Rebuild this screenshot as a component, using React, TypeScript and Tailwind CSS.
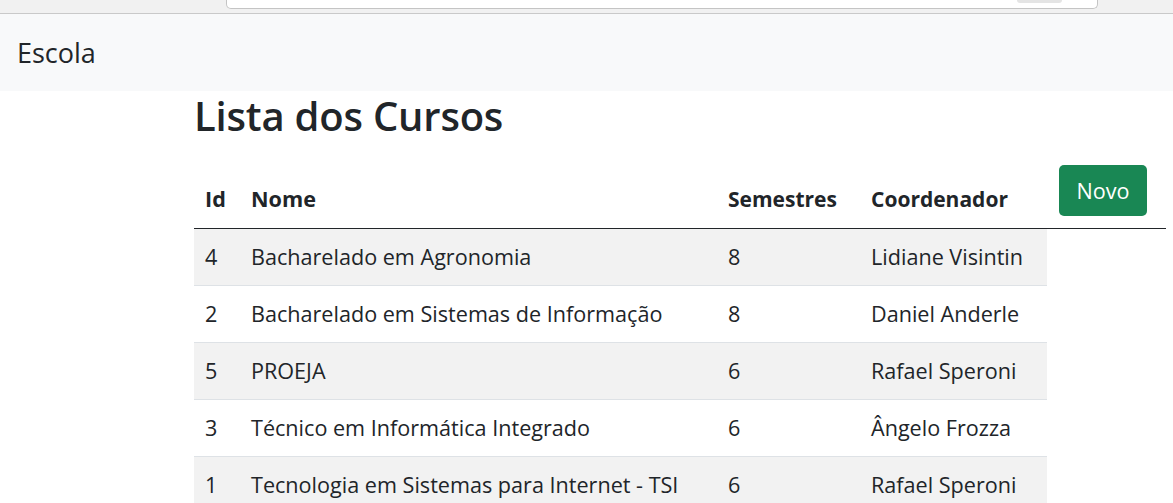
const cursos = [
  { id: 4, nome: "Bacharelado em Agronomia", semestres: 8, coordenador: "Lidiane Visintin" },
  { id: 2, nome: "Bacharelado em Sistemas de Informação", semestres: 8, coordenador: "Daniel Anderle" },
  { id: 5, nome: "PROEJA", semestres: 6, coordenador: "Rafael Speroni" },
  { id: 3, nome: "Técnico em Informática Integrado", semestres: 6, coordenador: "Ângelo Frozza" },
  { id: 1, nome: "Tecnologia em Sistemas para Internet - TSI", semestres: 6, coordenador: "Rafael Speroni" },
];

export default function App() {
  return (
    <div className="w-[1173px] h-[503px] overflow-hidden bg-white text-[#212529] font-['Open_Sans',sans-serif]">
      {/* Browser chrome leftover */}
      <div className="h-[14px] bg-[#f1f1f1] border-b border-[#c9c9c9] flex">
        <div className="ml-[226px] w-[872px] h-[9px] bg-white border border-t-0 border-[#c4c4c4] rounded-b-[5px] flex justify-end pr-[35px]">
          <div className="w-[45px] h-[3px] bg-[#e4e4e4] rounded-b-sm" />
        </div>
      </div>

      {/* Navbar */}
      <nav className="h-[77px] bg-[#f8f9fa] flex items-center px-[17px]">
        <span className="text-[27px] leading-none">Escola</span>
      </nav>

      <main className="pl-[194px] pr-[7px]">
        <h1 className="text-[40px] leading-[50px] font-semibold mb-[13px] tracking-[-0.2px]">Lista dos Cursos</h1>

        <table className="w-[972px] border-collapse text-[21.6px]">
          <thead>
            <tr>
              <th className="w-[46px] px-[11px] pt-[11px] pb-[12px] text-left align-bottom font-bold leading-[34px] border-b border-[#212529]">Id</th>
              <th className="w-[477px] px-[11px] pt-[11px] pb-[12px] text-left align-bottom font-bold leading-[34px] border-b border-[#212529]">Nome</th>
              <th className="w-[143px] px-[11px] pt-[11px] pb-[12px] text-left align-bottom font-bold leading-[34px] border-b border-[#212529] text-[21px]">Semestres</th>
              <th className="w-[187px] px-[11px] pt-[11px] pb-[12px] text-left align-bottom font-bold leading-[34px] border-b border-[#212529] text-[21px]">Coordenador</th>
              <th className="px-[12px] pt-[11px] pb-[12px] text-left align-bottom border-b border-[#212529]">
                <button className="w-[88px] h-[51px] bg-[#198754] text-white rounded-[5px] leading-[34px] text-[21.6px] font-normal">
                  Novo
                </button>
              </th>
            </tr>
          </thead>
          <tbody>
            {cursos.map((c, i) => (
              <tr key={c.id} className={i % 2 === 0 ? "bg-[#f2f2f2]" : "bg-white"}>
                <td className="px-[11px] py-[11px] leading-[34px] border-b border-[#dee2e6]">{c.id}</td>
                <td className="px-[11px] py-[11px] leading-[34px] border-b border-[#dee2e6]">{c.nome}</td>
                <td className="px-[11px] py-[11px] leading-[34px] border-b border-[#dee2e6]">{c.semestres}</td>
                <td className="px-[11px] py-[11px] leading-[34px] border-b border-[#dee2e6]">{c.coordenador}</td>
              </tr>
            ))}
          </tbody>
        </table>
      </main>
    </div>
  );
}
